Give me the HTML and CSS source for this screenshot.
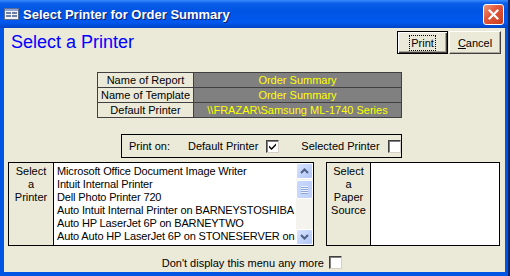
FILE: index.html
```html
<!DOCTYPE html>
<html lang="en">
<head>
    <meta charset="UTF-8">
    <title>Select Printer for Order Summary</title>
    <link rel="stylesheet" href="styles.css">
</head>
<body>
    <div class="window">
        <!-- Title bar -->
        <div class="titlebar">
            <svg class="app-icon" width="15" height="12" viewBox="0 0 15 12">
                <rect x="0.5" y="0.5" width="14" height="11" fill="#f4f4f4" stroke="#5a6e96"/>
                <rect x="1" y="1" width="13" height="2" fill="#8ea4d2"/>
                <rect x="2" y="4" width="5" height="2" fill="#6b7fa8"/>
                <rect x="8" y="4" width="5" height="2" fill="#6b7fa8"/>
                <rect x="2" y="7" width="5" height="2" fill="#6b7fa8"/>
                <rect x="8" y="7" width="5" height="2" fill="#6b7fa8"/>
            </svg>
            <span class="title">Select Printer for Order Summary</span>
            <div class="close-btn">
                <svg width="11" height="11" viewBox="0 0 11 11">
                    <path d="M1.5 1.5 L9.5 9.5 M9.5 1.5 L1.5 9.5" stroke="#fff" stroke-width="2.2" stroke-linecap="square"/>
                </svg>
            </div>
        </div>

        <div class="content">
            <div class="top-row">
                <h1>Select a Printer</h1>
                <div class="buttons">
                    <button class="btn default"><span class="focus">Print</span></button>
                    <button class="btn"><u>C</u>ancel</button>
                </div>
            </div>

            <table class="info">
                <tr><td class="label">Name of Report</td><td class="value">Order Summary</td></tr>
                <tr><td class="label">Name of Template</td><td class="value">Order Summary</td></tr>
                <tr><td class="label">Default Printer</td><td class="value">\\FRAZAR\Samsung ML-1740 Series</td></tr>
            </table>

            <div class="print-on">
                <span class="print-on-label">Print on:</span>
                <span class="opt">Default Printer</span>
                <span class="checkbox checked">
                    <svg width="9" height="9" viewBox="0 0 9 9">
                        <path d="M1 3.5 L3.5 6 L8 1.5 L8 3.5 L3.5 8 L1 5.5 Z" fill="#000"/>
                    </svg>
                </span>
                <span class="opt opt-second">Selected Printer</span>
                <span class="checkbox"></span>
            </div>

            <div class="select-row">
                <div class="group printer-group">
                    <div class="side-label">Select<br>a<br>Printer</div>
                    <div class="listbox">
                        <ul class="items">
                            <li>Microsoft Office Document Image Writer</li>
                            <li>Intuit Internal Printer</li>
                            <li>Dell Photo Printer 720</li>
                            <li>Auto Intuit Internal Printer on BARNEYSTOSHIBA</li>
                            <li>Auto HP LaserJet 6P on BARNEYTWO</li>
                            <li>Auto Auto HP LaserJet 6P on STONESERVER on</li>
                        </ul>
                        <div class="scrollbar">
                            <div class="sb-btn">
                                <svg width="9" height="6" viewBox="0 0 9 6"><path d="M1 5 L4.5 1.5 L8 5" fill="none" stroke="#4d6185" stroke-width="2"/></svg>
                            </div>
                            <div class="sb-thumb">
                                <span></span><span></span><span></span><span></span>
                            </div>
                            <div class="sb-track"></div>
                            <div class="sb-btn">
                                <svg width="9" height="6" viewBox="0 0 9 6"><path d="M1 1 L4.5 4.5 L8 1" fill="none" stroke="#4d6185" stroke-width="2"/></svg>
                            </div>
                        </div>
                    </div>
                </div>
                <div class="group paper-group">
                    <div class="side-label">Select<br>a<br>Paper<br>Source</div>
                    <div class="paper-box"></div>
                </div>
            </div>

            <div class="footer">
                <span>Don't display this menu any more</span>
                <span class="checkbox"></span>
            </div>
        </div>
    </div>
</body>
</html>
```

FILE: styles.css
```css
/* Global */
html, body {
    margin: 0;
    padding: 0;
    background: #0a246a;
}

body {
    font-family: 'Liberation Sans', Arial, sans-serif;
    font-size: 11px;
    color: #000;
}

.window {
    width: 508px;
    height: 276px;
    box-sizing: border-box;
    background: #0054e3;
    display: flex;
    flex-direction: column;
}

/* Title bar */
.titlebar {
    height: 28px;
    flex: none;
    display: flex;
    align-items: center;
    background: linear-gradient(to bottom, #3a8cff 0%, #0a5ee8 12%, #0054e3 40%, #0058ee 80%, #0043c4 100%);
    padding-left: 4px;
}

.title {
    margin-left: 4px;
    color: #fff;
    font-weight: bold;
    font-size: 13px;
    text-shadow: 1px 1px 0 #0a1e6a;
}

.close-btn {
    margin-left: auto;
    margin-right: 4px;
    width: 19px;
    height: 19px;
    border: 1px solid #fff;
    border-radius: 3px;
    background: linear-gradient(135deg, #f09a7c 0%, #e2583c 40%, #c83b1d 100%);
    display: flex;
    align-items: center;
    justify-content: center;
}

/* Dialog body */
.content {
    flex: 1;
    background: #ebe9d8;
    margin: 0 3px 4px 4px;
}

.top-row {
    display: flex;
    align-items: center;
    margin-top: 3px;
    height: 23px;
}

h1 {
    margin: 0 0 0 7px;
    font-size: 18px;
    font-weight: normal;
    color: #0000ff;
}

.buttons {
    margin-left: auto;
    margin-right: 4px;
    display: flex;
    gap: 1px;
}

.btn {
    font-family: inherit;
    font-size: 11px;
    height: 23px;
    width: 51px;
    padding: 0;
    background: #ebe9d8;
    border: 1px solid;
    border-color: #fff #404040 #404040 #fff;
    box-shadow: inset -1px -1px 0 #aca899;
    color: #000;
}

.btn + .btn {
    width: 52px;
}

.btn.default {
    border: 1px solid #000;
    box-shadow: inset 1px 1px 0 #fff, inset -1px -1px 0 #404040, inset -2px -2px 0 #aca899;
}

.focus {
    outline: 1px dotted #000;
    padding: 1px 1px;
}

/* Info table */
.info {
    margin: 18px 0 0 93px;
    border-collapse: collapse;
    width: 305px;
}

.info td {
    border: 1px solid #404040;
    height: 14px;
    padding: 0;
    text-align: center;
    line-height: 14px;
}

.info .label {
    width: 95px;
}

.info .value {
    background: #808080;
    color: #ffff00;
}

/* Print on box */
.print-on {
    margin: 16px 0 0 117px;
    width: 281px;
    height: 24px;
    box-sizing: border-box;
    border: 1px solid #000;
    display: flex;
    align-items: center;
}

.print-on-label {
    margin-left: 7px;
    width: 59px;
}

.opt-second {
    margin-left: 22px;
}

.checkbox {
    width: 13px;
    height: 13px;
    box-sizing: border-box;
    background: #fff;
    border: 1px solid;
    border-color: #404040 #d4d0c8 #d4d0c8 #404040;
    box-shadow: inset 1px 1px 0 #808080;
    display: inline-flex;
    align-items: center;
    justify-content: center;
    margin-left: 8px;
}

/* Select rows */
.select-row {
    display: flex;
    margin: 4px 0 0 4px;
    gap: 12px;
    height: 84px;
}

.group {
    display: flex;
    border: 1px solid #000;
}

.side-label {
    text-align: center;
    line-height: 13px;
    padding-top: 2px;
    border-right: 1px solid #000;
    box-sizing: border-box;
}

.printer-group .side-label {
    width: 45px;
}

.paper-group .side-label {
    width: 44px;
}

.listbox {
    width: 259px;
    background: #fff;
    display: flex;
}

.items {
    list-style: none;
    margin: 0;
    padding: 2px 0 0 3px;
    flex: 1;
    overflow: hidden;
    white-space: nowrap;
    letter-spacing: -0.15px;
}

.items li {
    line-height: 13px;
    height: 13px;
}

.scrollbar {
    width: 17px;
    display: flex;
    flex-direction: column;
    background: #f4f3ee;
}

.sb-btn {
    height: 16px;
    box-sizing: border-box;
    border: 1px solid #fff;
    border-radius: 2px;
    background: linear-gradient(135deg, #dbe6fe 0%, #c4d5fc 50%, #b2c6f5 100%);
    display: flex;
    align-items: center;
    justify-content: center;
}

.sb-thumb {
    height: 19px;
    margin-top: 1px;
    box-sizing: border-box;
    border: 1px solid #fff;
    border-radius: 2px;
    background: linear-gradient(to right, #c9d8fc, #bdd0fa);
    display: flex;
    flex-direction: column;
    align-items: center;
    justify-content: center;
    gap: 1px;
}

.sb-thumb span {
    width: 7px;
    height: 1px;
    background: #eef3ff;
    box-shadow: 0 1px 0 #8ca6dc;
}

.sb-track {
    flex: 1;
}

.paper-group {
    width: 172px;
}

.paper-box {
    flex: 1;
    background: #fff;
}

/* Footer */
.footer {
    display: flex;
    align-items: center;
    justify-content: flex-end;
    margin: 10px 0 0 0;
    padding-right: 163px;
}

.footer .checkbox {
    margin-left: 5px;
}
```
